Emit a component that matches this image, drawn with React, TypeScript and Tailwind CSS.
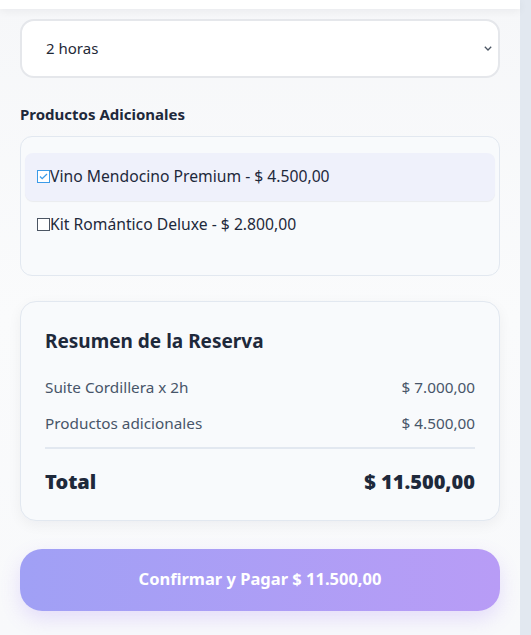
const extras = [
  { name: 'Vino Mendocino Premium', price: '$ 4.500,00', checked: true },
  { name: 'Kit Romántico Deluxe', price: '$ 2.800,00', checked: false },
];

const lines = [
  { label: 'Suite Cordillera x 2h', amount: '$ 7.000,00' },
  { label: 'Productos adicionales', amount: '$ 4.500,00' },
];

export default function App() {
  return (
    <div
      className="flex h-[635px] w-[531px] overflow-hidden bg-[#e2e8f0]"
      style={{ fontFamily: "'Noto Sans', 'Open Sans', sans-serif" }}
    >
      <div className="flex w-[520px] flex-col bg-gradient-to-b from-[#f6f7f9] via-[#fafbfc] to-[#f8f9fb]">
        <div className="h-[9px] bg-white shadow-[0_2px_8px_rgba(15,23,42,0.06)]" />

        <div className="flex flex-col px-5 pt-[10px]">
          <div className="flex h-[59px] items-center justify-between rounded-[14px] border-2 border-[#e5e7eb] bg-white pl-6 pr-[6px] text-[15px] text-[#1f2937]">
            <span>2 horas</span>
            <svg width="8" height="5" viewBox="0 0 8 5" fill="none" stroke="#4b5563" strokeWidth="1.3">
              <path d="M0.8 0.8l3.2 3.2 3.2-3.2" />
            </svg>
          </div>

          <h3 className="mt-[25px] text-[15px] font-bold text-[#1e293b]">Productos Adicionales</h3>

          <div className="mt-[10px] flex h-[140px] flex-col rounded-xl border border-[#e2e8f0] bg-[#f8fafc] px-1 pt-4">
            {extras.map((item) => (
              <div
                key={item.name}
                className={
                  item.checked
                    ? 'flex h-[48px] items-center rounded-lg bg-[#eff1fb] px-3 text-[15.7px] text-[#1e293b] shadow-[0_1px_1px_rgba(15,23,42,0.06)]'
                    : 'flex h-[48px] items-center rounded-lg px-3 text-[15.7px] text-[#1e293b]'
                }
              >
                {item.checked ? (
                  <span className="flex h-[13px] w-[13px] items-center justify-center border border-[#3b9be8] bg-white">
                    <svg width="9" height="7" viewBox="0 0 9 7" fill="none" stroke="#3b9be8" strokeWidth="1.3">
                      <path d="M1 3.5l2.2 2.2L8 1" />
                    </svg>
                  </span>
                ) : (
                  <span className="h-[13px] w-[13px] border border-[#4b5563] bg-white" />
                )}
                <span>
                  {item.name} - {item.price}
                </span>
              </div>
            ))}
          </div>

          <div className="mt-[25px] flex h-[220px] flex-col rounded-2xl border border-[#e2e8f0] bg-[#f8fafc] px-6 pt-[25px] shadow-[0_4px_14px_rgba(15,23,42,0.05)]">
            <h2 className="text-[19px] font-bold text-[#1e293b]">Resumen de la Reserva</h2>
            <div className="mt-[21px] flex flex-col gap-[14px]">
              {lines.map((l) => (
                <div key={l.label} className="flex justify-between text-[15.3px] leading-[22px] text-[#475569]">
                  <span>{l.label}</span>
                  <span>{l.amount}</span>
                </div>
              ))}
            </div>
            <div className="mt-[13px] h-[2px] bg-[#e2e8f0]" />
            <div className="mt-[18px] flex justify-between text-[20px] font-black text-[#1e293b]">
              <span>Total</span>
              <span>$ 11.500,00</span>
            </div>
          </div>

          <button className="mt-[28px] flex h-[62px] items-center justify-center rounded-[22px] bg-gradient-to-r from-[#a0a0f5] to-[#b89cf6] text-[16.5px] font-bold text-white shadow-[0_8px_20px_rgba(139,92,246,0.18)]">
            Confirmar y Pagar $ 11.500,00
          </button>
        </div>
      </div>
    </div>
  );
}
